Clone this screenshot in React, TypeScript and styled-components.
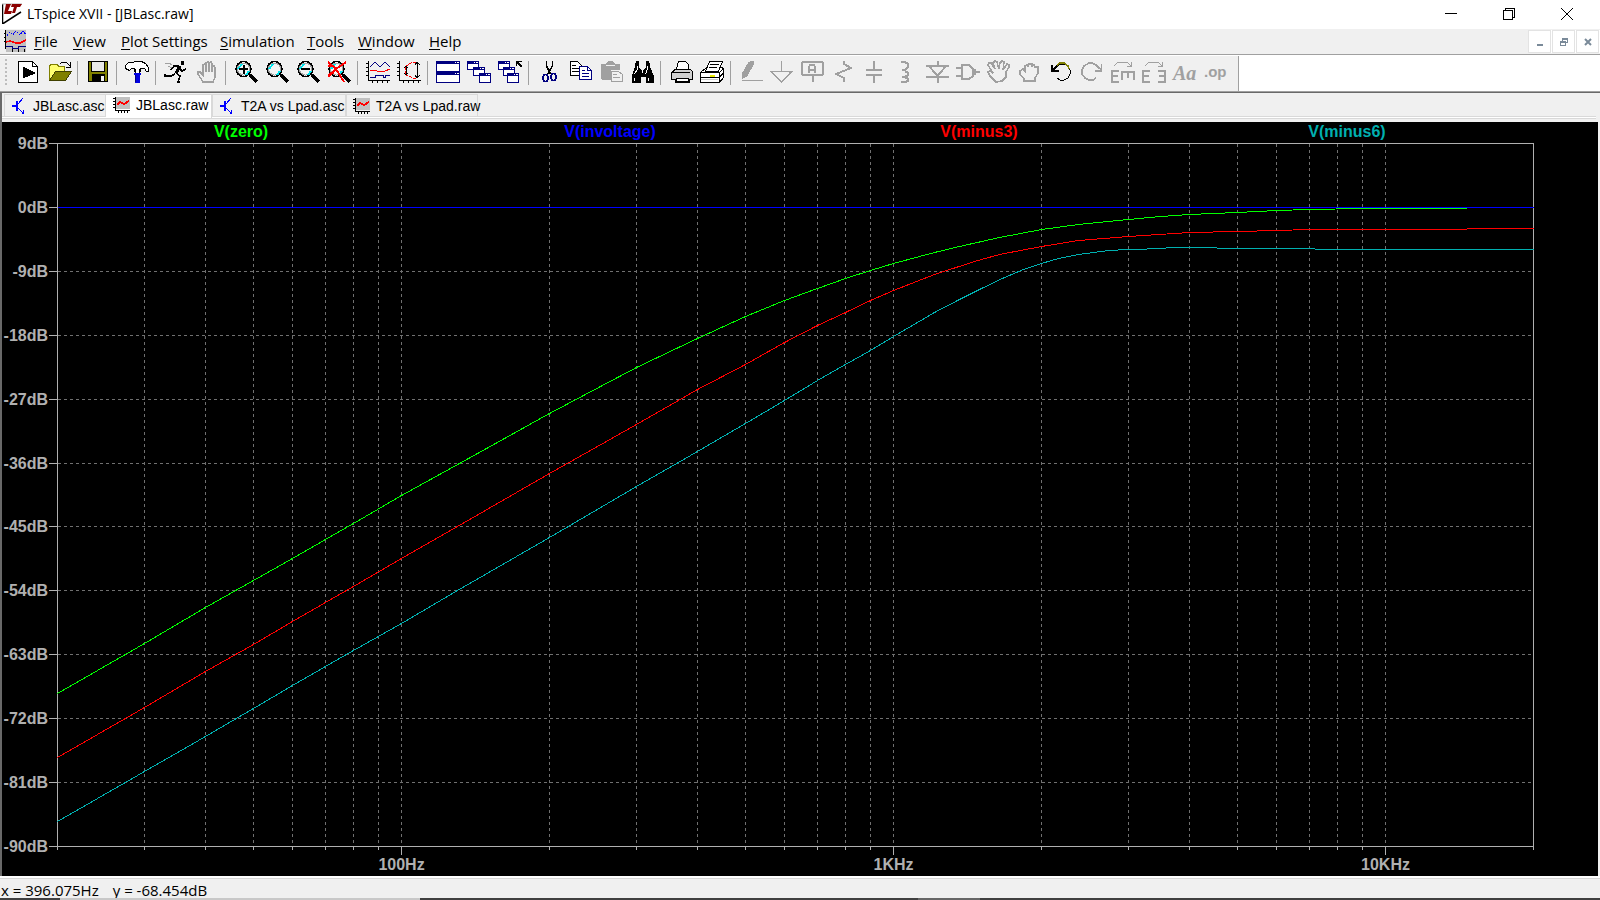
import React from "react";
import styled, { createGlobalStyle } from "styled-components";

const GlobalStyle = createGlobalStyle`
  * { box-sizing: border-box; }
  body { margin: 0; background: #f0f0f0; font-family: "Open Sans", "Noto Sans", sans-serif; color: #000; }
  button { font: inherit; color: inherit; border: 0; padding: 0; margin: 0; background: transparent; }
  svg { flex-shrink: 0; }
`;

const Window = styled.div`
  display: flex;
  flex-direction: column;
  height: 100vh;
  background: #f0f0f0;
  overflow: hidden;
`;

const TitleBar = styled.header`
  display: flex;
  align-items: flex-start;
  height: 29px;
  padding: 2px 0 0 2px;
  background: #fff;
`;

const Title = styled.h1`
  flex: 1;
  margin: 0;
  padding-left: 4px;
  font-size: 14px;
  line-height: 24px;
  font-weight: 400;
  white-space: nowrap;
`;

const WindowButton = styled.button`
  display: flex;
  align-items: center;
  justify-content: center;
  width: 58px;
  height: 24px;
`;

const WindowButtons = styled.div`
  display: flex;
  padding-right: 4px;
`;

const MenuBar = styled.nav`
  display: flex;
  align-items: flex-start;
  height: 25px;
  padding: 1px 0 0 4px;
  background: #f0f0f0;
`;

const Menus = styled.div`
  display: flex;
  flex: 1;
  gap: 16px;
  padding-left: 8px;
`;

const MenuButton = styled.button<{ $width: number }>`
  width: ${(p) => p.$width}px;
  font-size: 15px;
  line-height: 22px;
  text-align: left;
  white-space: nowrap;
  u { text-underline-offset: 2px; }
`;

const ChildButtons = styled.div`
  display: flex;
  gap: 1px;
  padding-right: 1px;
  background: #fff;
`;

const ChildButton = styled.button`
  display: flex;
  align-items: center;
  justify-content: center;
  width: 23px;
  height: 23px;
  border: 1px solid #e3e3e3;
  background: #fff;
`;

const ToolArea = styled.div`
  display: flex;
  height: 38px;
  border-top: 1px solid #a0a0a0;
  border-bottom: 1px solid #a0a0a0;
  background: #fff;
`;

const ToolBar = styled.div`
  display: flex;
  align-items: center;
  margin-top: 1px;
  padding: 0 7px 1px 0;
  border-right: 1px solid #a0a0a0;
  background: #f0f0f0;
`;

const Grip = styled.span`
  width: 12px;
  height: 28px;
  background: repeating-linear-gradient(#bdbdbd 0 2px, transparent 2px 4px) 5px 0 / 2px 28px no-repeat;
`;

const ToolButton = styled.button`
  display: flex;
  width: 31px;
  padding: 0 3px 2px 4px;
`;

const ToolIcon = styled.svg`
  width: 24px;
  height: 24px;
  overflow: visible;
  fill: none;
  stroke: #000;
  shape-rendering: crispEdges;
`;

const Separator = styled.span`
  width: 8px;
  height: 24px;
  border-left: 3px solid #f0f0f0;
  background: linear-gradient(90deg, #a0a0a0 1px, transparent 1px);
`;

const Workspace = styled.main`
  display: flex;
  flex: 1;
  min-height: 0;
  flex-direction: column;
  padding-right: 2px;
  border-top: 1px solid #696969;
  border-left: 2px solid #696969;
`;

const TabStrip = styled.div`
  display: flex;
  align-items: flex-end;
  height: 29px;
  padding: 1px 2px 4px;
  background:
    linear-gradient(#d9d9d9 1px, #fff 1px 2px, #d9d9d9 2px) 0 23px / calc(100% - 2px) 3px no-repeat,
    #f0f0f0;
`;

const Tab = styled.button<{ $active?: boolean; $width: number }>`
  display: flex;
  align-items: center;
  gap: 6px;
  width: ${(p) => p.$width}px;
  height: ${(p) => (p.$active ? 24 : 22)}px;
  margin-bottom: ${(p) => (p.$active ? 0 : 2)}px;
  padding: ${(p) => (p.$active ? "0 0 3px 7px" : "0 0 0 6px")};
  border: 1px solid #d9d9d9;
  border-bottom: 0;
  border-left-width: ${(p) => (p.$active ? 0 : 1)}px;
  background: ${(p) => (p.$active ? "#fff" : "#f0f0f0")};
  font-family: "Liberation Sans", Arial, sans-serif;
  font-size: 14px;
  line-height: 20px;
  white-space: nowrap;
`;

const PlotPane = styled.section`
  flex: 1;
  min-height: 0;
  background: #000;
`;

const PlotSvg = styled.svg`
  display: block;
  width: 100%;
  height: 100%;
  font-family: "Liberation Sans", Arial, sans-serif;
  font-size: 16px;
  font-weight: 700;
`;

const StatusBar = styled.footer`
  display: flex;
  align-items: center;
  gap: 14px;
  height: 22px;
  padding: 4px 2px 0 1px;
  border-top: 2px solid #fff;
  box-shadow: inset 0 1px #d7d7d7;
  font-size: 15px;
  line-height: 18px;
`;

const DesktopEdge = styled.div`
  height: 2px;
  background: linear-gradient(90deg, #404040 60px, #c8c8c8 60px 420px, #404040 420px 918px, #666 918px 980px, #404040 980px);
`;

/* ---------- toolbar artwork, 24 x 24 ---------- */
const G = "#a0a0a0";
const NAVY = "#000080";

const Lens = () => (
  <g>
    <path d="M16 15l7 7" strokeWidth="4" />
    <circle cx="9.500" cy="9" r="7.500" fill="#f4f4f4" strokeWidth="1.500" />
    <circle cx="9.500" cy="9" r="6" stroke="#a0a0a0" strokeWidth="1" />
    <path d="M4 9l4-5M12 15l3-4" stroke="#00e5ee" strokeWidth="2" />
  </g>
);

const MiniWindow = ({ x, y, w, h }: { x: number; y: number; w: number; h: number }) => (
  <g>
    <rect x={x + 0.5} y={y + 0.5} width={w - 1} height={h - 1} fill="#fff" stroke={NAVY} />
    <path d={`M${x} ${y + 1.5}h${w}`} stroke={NAVY} strokeWidth="3" />
    <path d={`M${x + w - 5} ${y + 1.5}h1m1 0h2`} stroke="#fff" />
  </g>
);

const art: Record<string, React.ReactNode> = {
  run: (
    <g>
      <path d="M2.500 1.500h14l5 5v16h-19z" fill="#fff" />
      <path d="M16.500 1.500v5h5" />
      <path d="M7 7l12 6-12 5z" fill="#000" />
    </g>
  ),
  open: (
    <g>
      <path d="M2.500 20V6l2-2h5l2 2h6v6" fill="#ffff70" stroke="#808000" />
      <path d="M2.500 20.500l6-9h16l-6 9z" fill="#808000" stroke="#404000" />
      <path d="M13 4l2-2h4l4 4M23.500 2v5h-5" />
    </g>
  ),
  save: (
    <g>
      <rect x="2.500" y="1.500" width="19" height="20" fill="#808000" strokeWidth="1" />
      <rect x="5.500" y="1.500" width="13" height="10" fill="#e8e8e8" />
      <rect x="6" y="14" width="13" height="7" fill="#000" stroke="none" />
      <rect x="15" y="16" width="3" height="5" fill="#f0f0f0" stroke="none" />
    </g>
  ),
  hammer: (
    <g>
      <path d="M.500 5.500l3-3h4l3-1h6l4 2 3 4v4h-2l-2-3h-4v3h-6v-3h-3l-2 2-4-2z" fill="#fff" />
      <path d="M10.500 9v4h4V9" fill="#fff" />
      <path d="M9 13h7v2l-1 0v8h-5v-8H9z" fill="#0000e0" stroke="none" />
      <path d="M10.500 15v7" stroke="#000080" />
    </g>
  ),
  man: (
    <g>
      <circle cx="18.500" cy="3" r="2" fill="#000" stroke="none" />
      <path d="M16 6l-4 7" strokeWidth="3" />
      <path d="M15 6h-5l-3 4M16 9l2 2 4-2M12 13l4 3-2 6h2M11 14l-4 2-6 0v-2" strokeWidth="1.500" />
      <path d="M1 3h4l3 2M4 6l4 2" stroke={G} />
    </g>
  ),
  hand: (
    <path d="M8 22l-5-8v-2h2l3 3V5l2-1 1 1v7V3l2-1 1 1v9V3l2-1 1 2v8V6l2 0 1 2v9l-2 5z" stroke={G} strokeWidth="1.500" />
  ),
  zoomIn: <g><Lens /><path d="M5 9h9M9.500 4.500v9" strokeWidth="2" /></g>,
  zoom: <Lens />,
  zoomOut: <g><Lens /><path d="M5 9h9" strokeWidth="2" /></g>,
  zoomFit: <g><Lens /><path d="M1 2l8 7 8 13M19 2L9 9l-8 7M1 6h4M7 12l-5 4" stroke="#f00" strokeWidth="2" /></g>,
  traces: (
    <g>
      <path d="M2.500 1v19.500h21M0 3.500h2M0 7.500h2M0 11.500h2M0 15.500h2M6.500 20v3M11.500 20v3M16.500 20v3M21.500 20v3" />
      <path d="M4 7l5-5 5 5 5-5 5 5" stroke={NAVY} />
      <path d="M4 11l4-1 6 2 5-1 5-2" stroke="#f00" />
      <path d="M4 17.500h5v-2h8v2h2v-2h5" stroke={NAVY} />
    </g>
  ),
  range: (
    <g>
      <path d="M2.500 1v19.500h21M0 3.500h2M0 7.500h2M0 11.500h2M0 15.500h2M6.500 20v3M11.500 20v3M16.500 20v3M21.500 20v3" />
      <path d="M19 2h-3l-7 4-1 4 1 5 7 3h3" stroke="#f00" strokeDasharray="3 1" />
      <path d="M9.500 6v9M7 8l2-2 2 2M7 13l2 2 2-2M20.500 2v16M18 5l2-3 3 3M18 15l2 3 3-3" />
    </g>
  ),
  tile: <g><MiniWindow x={0} y={1} w={24} h={11} /><MiniWindow x={0} y={12} w={24} h={11} /></g>,
  cascade: <g><MiniWindow x={0} y={1} w={12} h={9} /><MiniWindow x={6} y={7} w={12} h={9} /><MiniWindow x={12} y={13} w={12} h={10} /></g>,
  restore: (
    <g><MiniWindow x={0} y={1} w={12} h={9} /><MiniWindow x={5} y={7} w={12} h={9} /><MiniWindow x={9} y={13} w={12} h={10} />
      <path d="M18.500 6V1.500H24M19 2l5 5" strokeWidth="1.500" /></g>
  ),
  cut: (
    <g>
      <path d="M9.500 1v5l4 8M15.500 1v5l-5 8" strokeWidth="1.500" />
      <ellipse cx="8.500" cy="18" rx="2.500" ry="3.500" stroke={NAVY} strokeWidth="1.500" />
      <ellipse cx="16.500" cy="17" rx="2.500" ry="3.500" stroke={NAVY} strokeWidth="1.500" />
    </g>
  ),
  copy: (
    <g>
      <path d="M2.500 1.500h7l4 4v10h-11zM4 5.500h4M4 8.500h7M4 11.500h7" fill="#fff" />
      <path d="M11.500 6.500h8l4 4v9h-12z" fill="#fff" stroke={NAVY} />
      <path d="M19.500 6.500v4h4M14 10.500h3M14 13.500h7M14 16.500h7" stroke={NAVY} />
    </g>
  ),
  paste: (
    <g stroke="none">
      <path d="M2 4h5l2-3h5l2 3h5v6h-9v10H3l-1-1z" fill={G} />
      <path d="M7 5.500h9" stroke="#f0f0f0" />
      <path d="M12.500 11.500h7l4 3v7h-11zM14 14.500h4M14 17.500h7" fill="#f0f0f0" stroke={G} />
    </g>
  ),
  find: (
    <g>
      <path d="M5 3h4v4l2 3h3l2-3V3h4v4l4 9v7h-8v-6h-5v6H2v-7l3-9z" fill="#000" stroke="none" />
      <path d="M6 1.500h3M16 1.500h3" strokeWidth="2" />
      <path d="M7.500 6v3l-3 5M17.500 6v3l-2 5M4.500 18v3M18.500 18v3M12.500 10v3" stroke="#fff" />
    </g>
  ),
  print: (
    <g>
      <path d="M7.500 9l2-7.500h7l3 3v5" fill="#fff" />
      <path d="M2.500 13l4-4h15l2 3v7h-3v3h-14v-3h-4z" fill="#d0d0d0" />
      <path d="M7 18.500h12v3H7zM4 12.500h17" fill="#fff" />
    </g>
  ),
  print2: (
    <g>
      <path d="M.500 12.500l6-5h16l1 2v8l-4 5h-19z" fill="#fff" />
      <path d="M5.500 11l4-9.500h13l-4 9.500zM10 4.500h9M9 7.500h8M0 12.500h19v10M19 13l4-4M0 17.500h19l4-4" fill="#fff" />
      <path d="M1 19.500h17" stroke="#c8c8c8" />
      <path d="M10 15.500h5" stroke="#e8e800" strokeWidth="2" />
    </g>
  ),
  pencil: <g><path d="M2.500 19v-5l7-12 2-1h3v4l-6 11z" fill={G} stroke="none" /><path d="M3 20.500h21" stroke={G} /></g>,
  ground: <path d="M11.500 1v10M0 11.500h23M2 12l9.500 10L21 12" stroke={G} strokeWidth="1.500" />,
  label: <g stroke={G} strokeWidth="2"><rect x="1" y="2" width="21" height="13" rx="2" /><path d="M11.500 15v7M8 13V7l1-2h4l1 2v6M8 10h6" /></g>,
  resistor: <path d="M12 1v3l7 4-15 6 8 4v4" stroke={G} strokeWidth="2" />,
  capacitor: <path d="M11 1v8M3 10h16M3 15h16M11 16v7" stroke={G} strokeWidth="2" />,
  inductor: <path d="M7 2h4l3 2v3l-3 3H8M11 11l3 2v2l-3 2H8M11 17l3 2v2l-3 1H7" stroke={G} strokeWidth="2" />,
  diode: <path d="M12.500 1v4M1 6h23M4 6l8.500 10L21 6M1 17h23M12.500 17v6" stroke={G} strokeWidth="2" />,
  gate: <path d="M5 5h8l4 4v7l-4 3H6V5M0 8h5M0 16h5M17 12h7M19 9v6" stroke={G} strokeWidth="2" />,
  move: <path d="M9 22l-6-6-2-4 2-1 3 2-5-8 1-2h2l4 6-2-6 2-2 2 1 2 7 1-6 2-2 2 1-1 8 4-6 2 1v2l-3 5v5l-4 4z" stroke={G} strokeWidth="1.500" />,
  drag: <path d="M6 21v-2l-4-5v-3l3-2 2 2V6l2-1 1 1 1-2h3v2l2-1 1 2 3 0v6l-3 5v3z" stroke={G} strokeWidth="1.500" />,
  undo: (
    <g>
      <path d="M8 6l3-2h4l4 2 2 4v4l-2 4-4 2h-4l-3-2" />
      <path d="M8 5l3-2h4l4 3 1 3" stroke="#808000" strokeWidth="1.500" />
      <path d="M3 5v6h7M4 10l4-4" strokeWidth="2" />
    </g>
  ),
  redo: <path d="M20 9l-4-4-4-2H9L4 6l-2 4v4l3 4 4 2h4l3-2M21.500 4v7h-7M21 10l-4-5" stroke={G} strokeWidth="1.500" />,
  rotate: (
    <g stroke={G}><path d="M3 6l4-4h9l4 4M20.500 2v4h-5" /><path d="M8 11H1v11h7M1 16h6M11 20v-8h13M17 12v6M23 12v8" strokeWidth="2" /></g>
  ),
  mirror: (
    <g stroke={G}><path d="M3 6l4-4h9l4 4M20.500 2v4h-5" /><path d="M8 11H1v11h7M1 16h6M16 11h7v11h-7M23 16h-6" strokeWidth="2" /></g>
  ),
  text: <text x="0" y="20" fill={G} stroke="none" fontFamily="Liberation Serif, serif" fontStyle="italic" fontWeight="700" fontSize="20">Aa</text>,
  directive: <text x="0" y="17" fill={G} stroke="none" fontFamily="Liberation Sans, sans-serif" fontWeight="700" fontSize="15">.op</text>,
};

const toolGroups: [string, string][][] = [
  [["run", "Run"], ["open", "Open"]],
  [["save", "Save"]],
  [["hammer", "Control panel"]],
  [["man", "Start simulation"], ["hand", "Halt"]],
  [["zoomIn", "Zoom in"], ["zoom", "Zoom area"], ["zoomOut", "Zoom out"], ["zoomFit", "Zoom to fit"]],
  [["traces", "Pick visible traces"], ["range", "Autorange"]],
  [["tile", "Tile windows"], ["cascade", "Cascade windows"], ["restore", "Close windows"]],
  [["cut", "Cut"], ["copy", "Copy"], ["paste", "Paste"], ["find", "Find"]],
  [["print", "Print"], ["print2", "Print setup"]],
  [
    ["pencil", "Wire"], ["ground", "Ground"], ["label", "Label net"], ["resistor", "Resistor"],
    ["capacitor", "Capacitor"], ["inductor", "Inductor"], ["diode", "Diode"], ["gate", "Component"],
    ["move", "Move"], ["drag", "Drag"], ["undo", "Undo"], ["redo", "Redo"],
    ["rotate", "Rotate"], ["mirror", "Mirror"], ["text", "Text"], ["directive", "SPICE directive"],
  ],
];

const menus: [string, string, number][] = [
  ["F", "ile", 23], ["V", "iew", 32], ["P", "lot Settings", 83], ["S", "imulation", 71],
  ["T", "ools", 35], ["W", "indow", 55], ["H", "elp", 32],
];

const SchematicIcon = () => (
  <svg width="16" height="16" viewBox="0 0 16 16" fill="none" stroke="#00f" shapeRendering="crispEdges">
    <path d="M1 8h5" strokeWidth="1.500" /><path d="M6 3v10" strokeWidth="2" /><path d="M7 6l5-6M7 10l4 4v2M12 12v4H8" />
  </svg>
);

const WaveIcon = () => (
  <svg width="17" height="16" viewBox="0 0 17 16" fill="none" stroke="#000" shapeRendering="crispEdges">
    <path d="M3 0h14v12H3z" fill="#c0c0c0" stroke="none" />
    <path d="M2.500 0v13.500h14M0 1.500h2M0 4.500h2M0 7.500h2M0 10.500h2M5.500 13v3M8.500 13v3M11.500 13v3M14.500 13v3" />
    <path d="M4 8l3-3 4 2 5-3" stroke="#f00" strokeWidth="2" />
  </svg>
);

/* ---------- plot ---------- */
const left = 57.5;
const right = 1533.5;
const top = 143.5;
const bottom = 846.5;
const decade = 492;
const xOf = (hz: number) => Math.round(401 + decade * Math.log10(hz / 100)) + 0.5;
const yOf = (db: number) => Math.round(143 + ((9 - db) * 703) / 99) + 0.5;

const levels = Array.from({ length: 12 }, (_, i) => 9 - 9 * i);
const freqs = [10, 100, 1000, 10000]
  .flatMap((d) => [1, 2, 3, 4, 5, 6, 7, 8, 9].map((n) => n * d))
  .filter((f) => f > 20 && f < 20000);

type Point = [number, number];
const zero: Point[] = [
  [57, 693], [144, 643], [205, 607], [253, 580], [292, 558], [325, 539], [353, 523], [401, 495], [459, 463], [549, 413],
  [636, 367], [697, 338], [745, 316], [784, 300], [817, 288], [845, 278], [870, 270], [893, 263], [934, 252], [959, 246],
  [999, 237], [1041, 229], [1078, 224], [1128, 219], [1160, 216], [1189, 214], [1237, 212], [1276, 210],
  [1309, 209], [1362, 208], [1466, 208],
];
const minus3: Point[] = [
  [57, 757], [144, 707], [205, 671], [253, 644], [292, 621], [325, 602], [353, 586], [401, 558], [457, 526],
  [549, 473], [636, 424], [697, 389], [745, 364], [784, 342], [817, 325], [845, 312], [870, 300],
  [893, 290], [934, 274], [974, 261], [999, 254], [1041, 246], [1078, 240], [1128, 236], [1189, 232],
  [1237, 231], [1276, 230], [1309, 229], [1466, 229], [1467, 228], [1533, 228],
];
const minus6: Point[] = [
  [57, 821], [144, 771], [205, 736], [253, 708], [292, 685], [325, 666], [353, 650], [401, 623], [457, 590],
  [549, 537], [636, 486], [697, 451], [745, 423], [784, 400], [817, 380], [845, 364], [870, 350],
  [893, 336], [934, 312], [959, 299], [979, 289], [1004, 277], [1023, 269], [1041, 263],
  [1058, 258], [1078, 254], [1108, 250], [1128, 249], [1165, 248], [1166, 247], [1216, 247], [1217, 248],
  [1314, 248], [1315, 249], [1533, 249],
];

const traces: { name: string; color: string; labelX: number; points: Point[] }[] = [
  { name: "V(involtage)", color: "#0000ff", labelX: 610, points: [[57, 207], [1533, 207]] },
  { name: "V(minus6)", color: "#00b0b0", labelX: 1347, points: minus6 },
  { name: "V(minus3)", color: "#ff0000", labelX: 979, points: minus3 },
  { name: "V(zero)", color: "#00ff00", labelX: 241, points: zero },
];

const Plot = () => (
  <PlotSvg viewBox="2 122 1596 754" role="img" aria-label="Frequency response plot">
    <g stroke="#707070" strokeDasharray="3 3" shapeRendering="crispEdges">
      {levels.slice(2, -1).map((db) => <path key={db} d={`M${left} ${yOf(db)}H${right}`} />)}
      {freqs.map((f) => <path key={f} d={`M${xOf(f)} ${top}V${bottom}`} />)}
    </g>
    <g stroke="#b0b0b0" fill="none" shapeRendering="crispEdges">
      <path d={`M${left} ${top}H${right}V${bottom}H${left}z`} />
      {levels.map((db) => <path key={db} d={`M49 ${yOf(db)}H${left}`} />)}
      {[20, ...freqs, 20000].map((f) => (
        <path key={f} d={`M${xOf(f)} ${bottom}v${[100, 1000, 10000].includes(f) ? 8 : 3}`} />
      ))}
    </g>
    {traces.map((t) => (
      <g key={t.name}>
        <polyline
          points={t.points.map(([x, y]) => `${x + 0.5},${y + 0.5}`).join(" ")}
          fill="none"
          stroke={t.color}
          shapeRendering="crispEdges"
        />
        <text x={t.labelX} y="137" textAnchor="middle" fill={t.color}>{t.name}</text>
      </g>
    ))}
    <g fill="#b0b0b0">
      {levels.map((db) => <text key={db} x="48" y={yOf(db) + 5.5} textAnchor="end">{db}dB</text>)}
      {([[100, "100Hz"], [1000, "1KHz"], [10000, "10KHz"]] as [number, string][]).map(([f, label]) => (
        <text key={label} x={xOf(f)} y="870" textAnchor="middle">{label}</text>
      ))}
    </g>
  </PlotSvg>
);

export default function App() {
  return (
    <Window>
      <GlobalStyle />
      <TitleBar>
        <svg width="21" height="22" viewBox="0 0 21 22" fill="none">
          <path d="M.5 2v20L19 10" stroke="#000" strokeWidth="1.500" />
          <path d="M0 2h20" stroke="#b0b0b0" />
          <path d="M4 2h5L6 9h4l-1 3H2zM10 2h10l-2 3h-3l-2 6h-3l2-6h-3z" fill="#8b0000" />
        </svg>
        <Title>LTspice XVII - [JBLasc.raw]</Title>
        <WindowButtons>
          <WindowButton aria-label="Minimize">
            <svg width="12" height="12" stroke="#000"><path d="M0 5.500h12" /></svg>
          </WindowButton>
          <WindowButton aria-label="Restore">
            <svg width="12" height="12" stroke="#000" fill="none" shapeRendering="crispEdges">
              <path d="M.500 2.500h9v9h-9zM2.500 2V.500h9v9H10" />
            </svg>
          </WindowButton>
          <WindowButton aria-label="Close">
            <svg width="12" height="12" stroke="#000"><path d="M0 0l12 12M12 0L0 12" /></svg>
          </WindowButton>
        </WindowButtons>
      </TitleBar>

      <MenuBar>
        <svg width="22" height="22" viewBox="0 0 22 22" fill="none" stroke="#000" shapeRendering="crispEdges">
          <path d="M2 0h20v22H2z" fill="#c0c0c0" stroke="none" />
          <path d="M1.500 0v19M0 3.500h2M0 7.500h2M0 11.500h2M8.500 19v3M14.500 19v3M20.500 19v3" />
          <path d="M3 6l3-4 3 3 3-4 4 4 3-4 3 4" stroke="#00f" strokeDasharray="2 1" />
          <path d="M2 12l4-1 6 2h4l6-3" stroke="#f00" strokeWidth="1.500" />
          <path d="M2 16.500h6v2h6v-2h8" stroke={NAVY} />
        </svg>
        <Menus>
          {menus.map(([key, rest, width]) => (
            <MenuButton key={key} $width={width}><u>{key}</u>{rest}</MenuButton>
          ))}
        </Menus>
        <ChildButtons>
          <ChildButton aria-label="Minimize plot">
            <svg width="10" height="10" stroke="#7a8a99"><path d="M2 8h6" strokeWidth="2" /></svg>
          </ChildButton>
          <ChildButton aria-label="Restore plot">
            <svg width="10" height="10" stroke="#7a8a99" fill="none" shapeRendering="crispEdges">
              <path d="M1.500 4.500h5v4h-5zM1 5h6M3.500 4V1.500h5v4H7M3 2h6" />
            </svg>
          </ChildButton>
          <ChildButton aria-label="Close plot">
            <svg width="10" height="10" stroke="#7a8a99"><path d="M2 2l6 6M8 2L2 8" strokeWidth="2" /></svg>
          </ChildButton>
        </ChildButtons>
      </MenuBar>

      <ToolArea>
        <ToolBar role="toolbar">
          <Grip />
          {toolGroups.map((group, i) => (
            <React.Fragment key={i}>
              {i > 0 && <Separator />}
              {group.map(([id, label]) => (
                <ToolButton key={id} aria-label={label}>
                  <ToolIcon viewBox="0 0 24 24">{art[id]}</ToolIcon>
                </ToolButton>
              ))}
            </React.Fragment>
          ))}
        </ToolBar>
      </ToolArea>

      <Workspace>
        <TabStrip role="tablist">
          <Tab role="tab" $width={102}><SchematicIcon />JBLasc.asc</Tab>
          <Tab role="tab" aria-selected $active $width={106}><WaveIcon />JBLasc.raw</Tab>
          <Tab role="tab" $width={134}><SchematicIcon />T2A vs Lpad.asc</Tab>
          <Tab role="tab" $width={132}><WaveIcon />T2A vs Lpad.raw</Tab>
        </TabStrip>
        <PlotPane><Plot /></PlotPane>
      </Workspace>

      <StatusBar><span>x = 396.075Hz</span><span>y = -68.454dB</span></StatusBar>
      <DesktopEdge />
    </Window>
  );
}
